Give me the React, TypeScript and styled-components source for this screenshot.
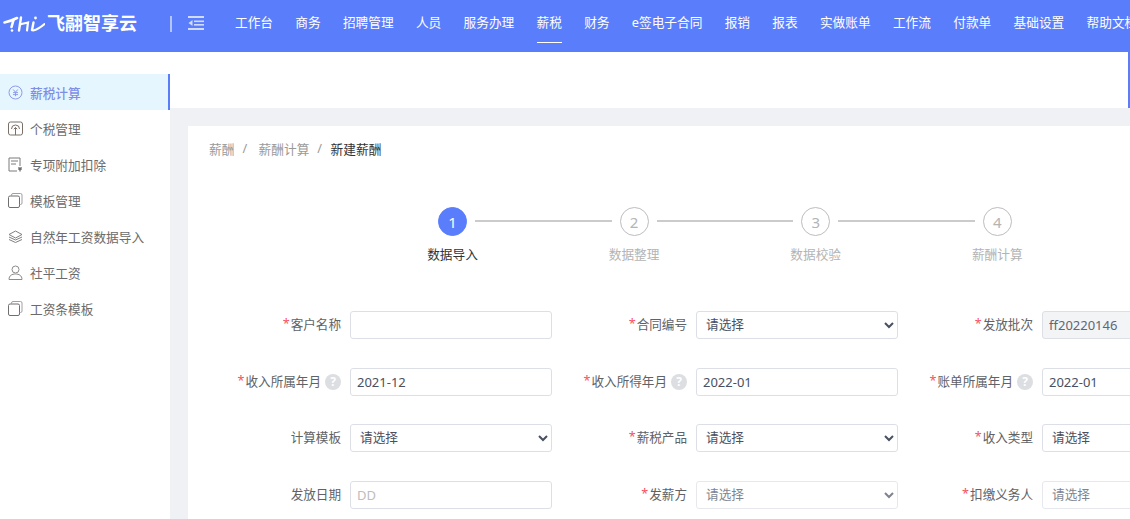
import React from "react";
import styled, { createGlobalStyle } from "styled-components";

const GlobalStyle = createGlobalStyle`
  html, body {
    margin: 0;
    padding: 0;
    background: #fff;
    font-family: "Noto Sans", "Noto Sans CJK SC", sans-serif;
  }
  * {
    box-sizing: border-box;
  }
`;

const Page = styled.div`
  width: 1130px;
  height: 519px;
  overflow: hidden;
  display: flex;
  flex-direction: column;
`;

const Header = styled.header`
  flex: none;
  height: 52px;
  background: #5a7efb;
  display: flex;
  align-items: flex-start;
  color: #fff;
`;

const Logo = styled.div`
  flex: none;
  width: 170px;
  height: 46px;
  padding-left: 3px;
  display: flex;
  align-items: center;
`;

const LogoText = styled.span`
  margin-left: 2px;
  font-size: 18px;
  font-weight: 700;
  line-height: 46px;
  white-space: nowrap;
`;

const Divider = styled.div`
  flex: none;
  width: 2px;
  height: 16px;
  margin-top: 16px;
  background: rgba(255, 255, 255, 0.55);
`;

const Collapse = styled.div`
  flex: none;
  margin: 15px 31px 0 16px;
  height: 16px;
  color: rgba(255, 255, 255, 0.72);
`;

const Nav = styled.nav`
  display: flex;
  gap: 22.25px;
`;

const NavItem = styled.a<{ $active?: boolean }>`
  flex: none;
  height: 43px;
  line-height: 44px;
  font-size: 12.7px;
  white-space: nowrap;
  color: #fff;
  border-bottom: 1px solid ${({ $active }) => ($active ? "#fff" : "transparent")};
`;

const Body = styled.div`
  flex: 1;
  display: flex;
  min-height: 0;
`;

const Sidebar = styled.aside`
  flex: none;
  width: 170px;
  padding-top: 22px;
  background: #fff;
`;

const MenuItem = styled.div<{ $active?: boolean }>`
  height: 36px;
  padding-left: 8px;
  display: flex;
  align-items: center;
  gap: 7px;
  font-size: 12.7px;
  white-space: nowrap;
  color: ${({ $active }) => ($active ? "#7f8fe6" : "#6b6b6b")};
  background: ${({ $active }) => ($active ? "#e6f6ff" : "transparent")};
  border-right: 2px solid ${({ $active }) => ($active ? "#5a7efb" : "transparent")};
  font-weight: ${({ $active }) => ($active ? 500 : 400)};
`;

const Main = styled.main`
  flex: 1;
  min-width: 0;
  display: flex;
  flex-direction: column;
  background: #f0f1f5;
`;

const TopStrip = styled.div`
  flex: none;
  height: 56px;
  background: #fff;
  border-right: 2px solid #5a7efb;
`;

const Content = styled.div`
  flex: 1;
  padding: 18px 0 0 18px;
`;

const Card = styled.section`
  height: 100%;
  background: #fff;
  padding-left: 21px;
  width: 960px;
`;

const Breadcrumb = styled.div`
  height: 44px;
  display: flex;
  align-items: center;
  font-size: 12.7px;
  color: #9a9a9a;
`;

const Crumb = styled.span<{ $current?: boolean }>`
  color: ${({ $current }) => ($current ? "#333" : "#9a9a9a")};
  margin-left: ${({ $current }) => ($current ? "-3px" : "0")};
`;

const Slash = styled.span`
  margin: 0 11.5px 0 8px;
  color: #9a9a9a;
`;

const Steps = styled.div`
  display: flex;
  margin: 37px 0 0 229px;
  height: 104px;
`;

const Step = styled.div`
  flex: none;
  width: 29px;
  display: flex;
  flex-direction: column;
  align-items: center;
`;

const StepCircle = styled.div<{ $active?: boolean }>`
  flex: none;
  width: 29px;
  height: 29px;
  border-radius: 50%;
  display: flex;
  align-items: center;
  justify-content: center;
  font-size: 15px;
  color: ${({ $active }) => ($active ? "#fff" : "#b4b4b4")};
  background: ${({ $active }) => ($active ? "#5a7efb" : "#fff")};
  border: 1px solid ${({ $active }) => ($active ? "#5a7efb" : "#bdbdbd")};
`;

const StepLabel = styled.div<{ $active?: boolean }>`
  margin-top: 7px;
  font-size: 12.7px;
  line-height: 22px;
  white-space: nowrap;
  color: ${({ $active }) => ($active ? "#333" : "#b4b4b4")};
`;

const StepLine = styled.div`
  flex: none;
  width: 136.6px;
  height: 2px;
  margin: 13px 8px 0;
  background: #cbcbcb;
`;

const Form = styled.div`
  display: grid;
  grid-template-columns: repeat(3, 346px);
  row-gap: 28.67px;
  margin-left: -3px;
`;

const Field = styled.div`
  display: flex;
  align-items: center;
  height: 28px;
`;

const Label = styled.label`
  flex: 1;
  margin: 0 9px 3px 0;
  display: flex;
  align-items: center;
  justify-content: flex-end;
  font-size: 12.6px;
  color: #606266;
  white-space: nowrap;
`;

const Star = styled.span`
  margin-right: 1px;
  color: #f5515f;
`;

const Help = styled.span`
  flex: none;
  width: 16px;
  height: 16px;
  margin: 3px 0 0 4px;
  border-radius: 50%;
  background: #dcdee2;
  color: #fff;
  font-size: 12px;
  font-weight: 700;
  line-height: 16px;
  text-align: center;
`;

const TextInput = styled.input`
  flex: none;
  width: 202px;
  height: 28px;
  padding: 0 6px;
  border: 1px solid #dcdfe6;
  border-radius: 3px;
  background: #fff;
  font: inherit;
  font-size: 13px;
  color: #495060;
  outline: none;

  &::placeholder {
    color: #bdbdbd;
  }

  &:disabled {
    background: #f3f4f6;
    color: #5f6675;
  }
`;

const SelectInput = styled.select`
  flex: none;
  width: 202px;
  height: 28px;
  padding: 0 5px 2px;
  border: 1px solid #dcdfe6;
  border-radius: 3px;
  background: #fff;
  font: inherit;
  font-size: 12.7px;
  color: #495060;
  outline: none;

  &:disabled {
    opacity: 0.7;
  }
`;

const LogoMark = () => (
  <svg width="42" height="20" viewBox="0 0 42 20" fill="none" stroke="#fff" strokeLinecap="round">
    <path d="M1.5 9.5 C5 8.8 10 7 14 5" strokeWidth="2.6" />
    <path d="M10.5 7 L8.5 14" strokeWidth="2.6" />
    <circle cx="9" cy="17.5" r="1.3" fill="#fff" stroke="none" />
    <path d="M18 4.5 L16 17.5" strokeWidth="2.4" />
    <path d="M17 11.5 C20 10.5 23 10 25 9.5 L24 17.5" strokeWidth="2.2" />
    <path d="M30.5 9.5 L29 17" strokeWidth="2.4" />
    <circle cx="32.5" cy="5" r="1.4" fill="#fff" stroke="none" />
    <path d="M30 17.5 C34 16.5 38 14 41.5 11" strokeWidth="2" />
  </svg>
);

const CollapseIcon = () => (
  <svg width="16" height="16" viewBox="0 0 16 16" fill="currentColor" style={{ display: "block" }}>
    <rect x="0" y="1" width="16" height="2" />
    <rect x="6" y="5.5" width="10" height="1.6" />
    <rect x="6" y="9" width="10" height="1.6" />
    <rect x="0" y="13" width="16" height="2" />
    <path d="M4.5 5 L0.5 8 L4.5 11 Z" />
  </svg>
);

const MoneyIcon = () => (
  <svg width="15" height="15" viewBox="0 0 15 15" fill="none" stroke="#8f9ce8" strokeWidth="1">
    <circle cx="7.5" cy="7.5" r="6.5" />
    <path d="M5.2 4.5 L7.5 7.2 L9.8 4.5 M5 7.6 H10 M5 9.6 H10 M7.5 7.2 V11.2" />
  </svg>
);

const TaxIcon = () => (
  <svg width="15" height="15" viewBox="0 0 15 15" fill="none" stroke="#7a7068" strokeWidth="1">
    <rect x="0.5" y="1" width="14" height="13" rx="2" />
    <path d="M3.5 8 A4 4 0 0 1 11.5 8 M7.5 14 V6.5 M5.8 8.2 L7.5 6.5 L9.2 8.2" />
  </svg>
);

const DeductIcon = () => (
  <svg width="15" height="15" viewBox="0 0 15 15" fill="none" stroke="#7a7a7a" strokeWidth="1">
    <path d="M9 14 H1 V1 H12 V9" />
    <path d="M3 4 H10 M3 7 H8" />
    <path d="M10.5 10 L12 11.5 L13.5 10 M10 12 H14 M12 11.5 V14.5" stroke="#444" />
  </svg>
);

const TemplateIcon = () => (
  <svg width="15" height="15" viewBox="0 0 15 15" fill="none" stroke="#6f6f6f" strokeWidth="1">
    <rect x="0.5" y="3" width="11" height="11.5" rx="1.5" />
    <path d="M3.5 3 V2 A1.5 1.5 0 0 1 5 0.5 H12.5 A1.5 1.5 0 0 1 14 2 V10 A1.5 1.5 0 0 1 12.5 11.5 H11.5" stroke="#a0a0a0" />
  </svg>
);

const LayersIcon = () => (
  <svg width="15" height="15" viewBox="0 0 15 15" fill="none" stroke="#808080" strokeWidth="1">
    <path d="M7.5 2 L14 5.5 L7.5 9 L1 5.5 Z" />
    <path d="M1 8 L7.5 11 L14 8 M1 10.5 L7.5 13.5 L14 10.5" />
  </svg>
);

const UserIcon = () => (
  <svg width="15" height="15" viewBox="0 0 15 15" fill="none" stroke="#8c8c8c" strokeWidth="1">
    <circle cx="7.5" cy="4.5" r="3.5" />
    <path d="M1 14.5 C1 10.5 4 9 7.5 9 C11 9 14 10.5 14 14.5 Z" />
  </svg>
);

const NAV_ITEMS = [
  "工作台", "商务", "招聘管理", "人员", "服务办理", "薪税", "财务", "e签电子合同",
  "报销", "报表", "实做账单", "工作流", "付款单", "基础设置", "帮助文档",
];

const MENU_ITEMS = [
  { text: "薪税计算", icon: <MoneyIcon />, active: true },
  { text: "个税管理", icon: <TaxIcon /> },
  { text: "专项附加扣除", icon: <DeductIcon /> },
  { text: "模板管理", icon: <TemplateIcon /> },
  { text: "自然年工资数据导入", icon: <LayersIcon /> },
  { text: "社平工资", icon: <UserIcon /> },
  { text: "工资条模板", icon: <TemplateIcon /> },
];

const STEPS = ["数据导入", "数据整理", "数据校验", "薪酬计算"];

interface FieldDef {
  label: string;
  required?: boolean;
  help?: boolean;
  kind: "input" | "select";
  value?: string;
  placeholder?: string;
  disabled?: boolean;
}

const FIELDS: FieldDef[] = [
  { label: "客户名称", required: true, kind: "input" },
  { label: "合同编号", required: true, kind: "select" },
  { label: "发放批次", required: true, kind: "input", value: "ff20220146", disabled: true },
  { label: "收入所属年月", required: true, help: true, kind: "input", value: "2021-12" },
  { label: "收入所得年月", required: true, help: true, kind: "input", value: "2022-01" },
  { label: "账单所属年月", required: true, help: true, kind: "input", value: "2022-01" },
  { label: "计算模板", kind: "select" },
  { label: "薪税产品", required: true, kind: "select" },
  { label: "收入类型", required: true, kind: "select" },
  { label: "发放日期", kind: "input", placeholder: "DD" },
  { label: "发薪方", required: true, kind: "select", disabled: true },
  { label: "扣缴义务人", required: true, kind: "select", disabled: true },
];

const App: React.FC = () => {
  return (
    <Page>
      <GlobalStyle />
      <Header>
        <Logo>
          <LogoMark />
          <LogoText>飞翮智享云</LogoText>
        </Logo>
        <Divider />
        <Collapse>
          <CollapseIcon />
        </Collapse>
        <Nav>
          {NAV_ITEMS.map((item) => (
            <NavItem key={item} $active={item === "薪税"}>
              {item}
            </NavItem>
          ))}
        </Nav>
      </Header>
      <Body>
        <Sidebar>
          {MENU_ITEMS.map((item) => (
            <MenuItem key={item.text} $active={item.active}>
              {item.icon}
              {item.text}
            </MenuItem>
          ))}
        </Sidebar>
        <Main>
          <TopStrip />
          <Content>
            <Card>
              <Breadcrumb>
                <Crumb>薪酬</Crumb>
                <Slash>/</Slash>
                <Crumb>薪酬计算</Crumb>
                <Slash>/</Slash>
                <Crumb $current>新建薪酬</Crumb>
              </Breadcrumb>
              <Steps>
                {STEPS.map((label, i) => (
                  <React.Fragment key={label}>
                    <Step>
                      <StepCircle $active={i === 0}>{i + 1}</StepCircle>
                      <StepLabel $active={i === 0}>{label}</StepLabel>
                    </Step>
                    {i < STEPS.length - 1 && <StepLine />}
                  </React.Fragment>
                ))}
              </Steps>
              <Form>
                {FIELDS.map((field) => (
                  <Field key={field.label}>
                    <Label>
                      {field.required && <Star>*</Star>}
                      {field.label}
                      {field.help && <Help>?</Help>}
                    </Label>
                    {field.kind === "input" ? (
                      <TextInput
                        defaultValue={field.value}
                        placeholder={field.placeholder}
                        disabled={field.disabled}
                      />
                    ) : (
                      <SelectInput disabled={field.disabled}>
                        <option>请选择</option>
                      </SelectInput>
                    )}
                  </Field>
                ))}
              </Form>
            </Card>
          </Content>
        </Main>
      </Body>
    </Page>
  );
};

export default App;
